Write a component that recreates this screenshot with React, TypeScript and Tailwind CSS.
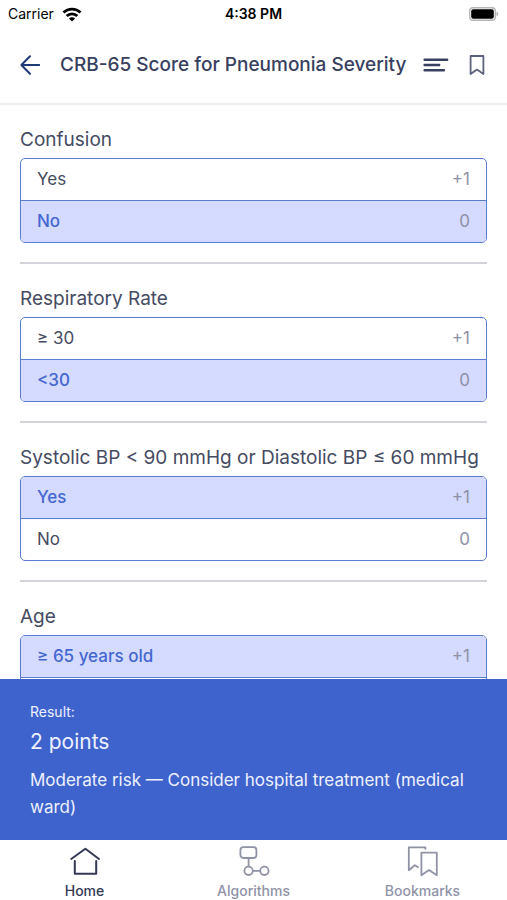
import React, { useState } from 'react';

interface Option {
  label: string;
  points: number;
}

interface Question {
  id: string;
  title: string;
  options: Option[];
  initial: number;
}

const questions: Question[] = [
  {
    id: 'confusion',
    title: 'Confusion',
    options: [{ label: 'Yes', points: 1 }, { label: 'No', points: 0 }],
    initial: 1,
  },
  {
    id: 'respiratory-rate',
    title: 'Respiratory Rate',
    options: [{ label: '≥ 30', points: 1 }, { label: '<30', points: 0 }],
    initial: 1,
  },
  {
    id: 'blood-pressure',
    title: 'Systolic BP < 90 mmHg or Diastolic BP ≤ 60 mmHg',
    options: [{ label: 'Yes', points: 1 }, { label: 'No', points: 0 }],
    initial: 0,
  },
  {
    id: 'age',
    title: 'Age',
    options: [{ label: '≥ 65 years old', points: 1 }, { label: '<65 years old', points: 0 }],
    initial: 0,
  },
];

const adviceFor = (score: number) => {
  if (score === 0) return 'Low risk — Consider home treatment';
  if (score <= 2) return 'Moderate risk — Consider hospital treatment (medical ward)';
  return 'High risk — Urgent hospital admission';
};

const StatusBar = () => (
  <div className="grid grid-cols-3 items-center h-7 px-2 text-black">
    <div className="flex items-center gap-2 text-sm">
      <span>Carrier</span>
      <svg width="20" height="15" viewBox="0 0 20 15" fill="none" stroke="currentColor" strokeWidth="2.8">
        <path d="M1.5 5.6a12 12 0 0 1 17 0" />
        <path d="M4.7 9a7.5 7.5 0 0 1 10.6 0" />
        <path d="M10 14.6 6.9 11.5a4.4 4.4 0 0 1 6.2 0z" fill="currentColor" stroke="none" />
      </svg>
    </div>
    <span className="text-center text-sm font-semibold">4:38 PM</span>
    <svg className="justify-self-end" width="30" height="14" viewBox="0 0 30 14">
      <rect x="0.7" y="0.7" width="25.6" height="12.6" rx="3.4" fill="#fff" stroke="#b5b5b5" strokeWidth="1.4" />
      <rect x="2.2" y="2.2" width="22.6" height="9.6" rx="2" fill="#000" />
      <path d="M27.5 4.6c2.4.8 2.4 4 0 4.8z" fill="#b5b5b5" />
    </svg>
  </div>
);

const Header = () => (
  <header className="flex items-center h-[77px] px-5 pb-0.5 border-b-2 border-[#ececee] text-[#38405f]">
    <button aria-label="Back" className="text-[#1f3a78]">
      <svg width="20" height="20" viewBox="0 0 20 20" fill="none" stroke="currentColor" strokeWidth="2" strokeLinecap="round" strokeLinejoin="round">
        <path d="M19.2 10H1.4M10 1.2 1.4 10l8.6 8.8" />
      </svg>
    </button>
    <h1 className="flex-1 ml-5 pt-0.5 text-[19px] font-medium whitespace-nowrap">CRB-65 Score for Pneumonia Severity</h1>
    <button aria-label="Contents">
      <svg width="26" height="14" viewBox="0 0 26 14" fill="none" stroke="currentColor" strokeWidth="2.4" strokeLinecap="round">
        <path d="M1.6 1.8h22.6M1.6 7h14.6M1.6 12.2h19.4" />
      </svg>
    </button>
    <button aria-label="Bookmark" className="ml-5 mr-0.5 text-[#5c627c]">
      <svg width="16" height="20" viewBox="0 0 16 20" fill="none" stroke="currentColor" strokeWidth="1.8" strokeLinejoin="round">
        <path d="M1.6 1h12.8v18L8 14.6 1.6 19z" />
      </svg>
    </button>
  </header>
);

interface QuestionCardProps {
  question: Question;
  selected: number;
  onSelect: (index: number) => void;
}

const QuestionCard: React.FC<QuestionCardProps> = ({ question, selected, onSelect }) => (
  <fieldset className="pt-[21px] pb-[19px] border-b-2 border-[#d3d4d9] last:border-b-0">
    <legend className="float-left w-full mb-1 text-[19px] leading-7 text-[#454b62]">{question.title}</legend>
    <div className="clear-both border border-[#5b7cd0] rounded-[5px] overflow-hidden divide-y divide-[#5b7cd0]">
      {question.options.map((option, index) => (
        <label
          key={option.label}
          className="flex items-center justify-between py-2.5 px-4 text-[17px] leading-[21px] text-[#454b62] cursor-pointer has-checked:bg-[#d5daff] has-checked:text-[#4467d0] has-checked:font-medium"
        >
          <input
            type="radio"
            name={question.id}
            checked={selected === index}
            onChange={() => onSelect(index)}
            className="sr-only"
          />
          <span>{option.label}</span>
          <span className="font-normal text-[#8e91a8]">{option.points > 0 ? `+${option.points}` : option.points}</span>
        </label>
      ))}
    </div>
  </fieldset>
);

const HomeIcon = () => (
  <svg width="32" height="32" viewBox="0 0 32 32" fill="none" stroke="currentColor" strokeWidth="2" strokeLinecap="round" strokeLinejoin="round">
    <path d="M2.2 13 16.4 2.8 30 13M5.8 15v12.8h21.4V15" />
  </svg>
);

const AlgorithmsIcon = () => (
  <svg width="32" height="32" viewBox="0 0 32 32" fill="none" stroke="currentColor" strokeWidth="1.8">
    <rect x="2.4" y="1.2" width="16" height="10.8" rx="3" />
    <path d="M10.6 12v8.6M15 24.8h7" />
    <circle cx="10.6" cy="24.8" r="4.2" />
    <circle cx="26.4" cy="24.8" r="4.2" />
  </svg>
);

const BookmarksIcon = () => (
  <svg width="32" height="32" viewBox="0 0 32 32" fill="none" stroke="currentColor" strokeWidth="1.8" strokeLinejoin="round">
    <path d="M18.4 3.6V1.4H1.8v22.8l6-5 3.8 2.4" />
    <path d="M14.4 6.6h15.4v22.6L22 24l-7.6 5.2z" />
  </svg>
);

const tabs = [
  { label: 'Home', icon: HomeIcon, active: true },
  { label: 'Algorithms', icon: AlgorithmsIcon, active: false },
  { label: 'Bookmarks', icon: BookmarksIcon, active: false },
];

export default function App() {
  const [answers, setAnswers] = useState<number[]>(questions.map((q) => q.initial));
  const score = questions.reduce((sum, q, i) => sum + q.options[answers[i]].points, 0);

  return (
    <div className="h-screen flex flex-col bg-white font-['Inter',sans-serif]">
      <StatusBar />
      <Header />

      {/* Questions */}
      <main className="flex-1 min-h-0 overflow-y-auto px-5 [scrollbar-width:none]">
        {questions.map((question, i) => (
          <QuestionCard
            key={question.id}
            question={question}
            selected={answers[i]}
            onSelect={(index) => setAnswers(answers.map((a, j) => (j === i ? index : a)))}
          />
        ))}
      </main>

      {/* Result */}
      <section className="px-[30px] pt-5 pb-[19px] bg-[#3f63cd] text-[#eef1ff]">
        <p className="text-sm leading-[26px]">Result:</p>
        <p className="text-[21px] leading-[34px]">{score} points</p>
        <p className="mt-2 text-[17px] leading-[27px]">{adviceFor(score)}</p>
      </section>

      {/* Tabs */}
      <nav className="grid grid-cols-3 h-[60px] pt-1.5">
        {tabs.map(({ label, icon: Icon, active }) => (
          <a
            key={label}
            href="#"
            className={`flex flex-col items-center gap-[3px] text-sm font-medium ${active ? 'text-[#343a56]' : 'text-[#9093a6]'}`}
          >
            <Icon />
            <span>{label}</span>
          </a>
        ))}
      </nav>
    </div>
  );
}
